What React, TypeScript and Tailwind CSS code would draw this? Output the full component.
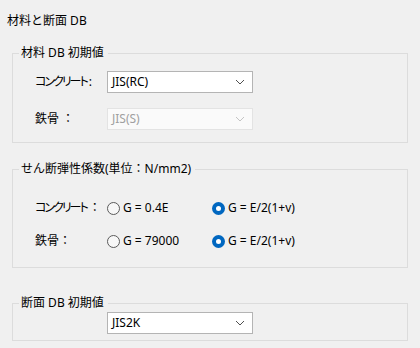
import React from "react";

const font = "font-['Noto_Sans','Noto_Sans_CJK_JP',sans-serif]";
const kana = "[font-feature-settings:'palt'] tracking-[-2px]";

type ComboProps = {
  value: string;
  disabled?: boolean;
};

const Combo: React.FC<ComboProps> = ({ value, disabled }) => {
  return (
    <div
      className={`flex items-center justify-between w-[146px] h-[22px] pl-[4px] pr-[4px] border ${
        disabled ? "border-[#e3e3e3] bg-[#fafafa] text-[#a0a0a0]" : "border-[#b4b4b4] bg-white text-black"
      }`}
    >
      <span className="leading-4">{value}</span>
      <svg width="10" height="6" viewBox="0 0 10 6" className="mr-[3px]">
        <polyline
          points="1,1 5,5 9,1"
          fill="none"
          stroke={disabled ? "#c4c4c4" : "#505050"}
          strokeWidth="1"
        />
      </svg>
    </div>
  );
};

const Radio: React.FC<{ label: string; checked?: boolean }> = ({ label, checked }) => {
  return (
    <div className="flex items-center gap-[3px]">
      {checked ? (
        <span className="flex items-center justify-center w-[13px] h-[13px] rounded-full bg-[#0067c0]">
          <span className="w-[5px] h-[5px] rounded-full bg-white"></span>
        </span>
      ) : (
        <span className="w-[13px] h-[13px] rounded-full border border-[#5a5a5a] bg-[#f7f7f7]"></span>
      )}
      <span className="leading-4 whitespace-nowrap">{label}</span>
    </div>
  );
};

const Group: React.FC<{ title: React.ReactNode; className: string; children: React.ReactNode }> = ({
  title,
  className,
  children,
}) => {
  return (
    <fieldset className={`mx-[12px] border border-[#dcdcdc] ${className}`}>
      <legend className="ml-[6px] pl-[2px] pr-[4px] leading-4">{title}</legend>
      {children}
    </fieldset>
  );
};

export default function App() {
  return (
    <div className={`w-[420px] h-[348px] bg-[#f0f0f0] text-[12px] text-black overflow-hidden ${font}`}>
      <div className="pt-[13px] pl-[7px] leading-4">材料と断面 DB</div>

      <Group title="材料 DB 初期値" className="mt-[16px] h-[98px]">
        <div className="flex flex-col gap-[15px] mt-[10px] pl-[22px]">
          <div className="flex items-center">
            <span className="w-[72px] shrink-0 whitespace-nowrap">
              <span className={kana}>コンクリート</span>
              <span className="ml-[2px]">:</span>
            </span>
            <Combo value="JIS(RC)" />
          </div>
          <div className="flex items-center">
            <span className="w-[72px] shrink-0 whitespace-nowrap">鉄骨 ：</span>
            <Combo value="JIS(S)" disabled />
          </div>
        </div>
      </Group>

      <Group title="せん断弾性係数(単位：N/mm2)" className="mt-[18px] h-[107px]">
        <div className="flex flex-col gap-[11px] mt-[20px] pl-[22px]">
          <div className="flex items-center h-[22px]">
            <span className="w-[72px] shrink-0 whitespace-nowrap">
              <span className={kana}>コンクリート</span>
              <span className="ml-[2px]">：</span>
            </span>
            <div className="w-[105px] shrink-0">
              <Radio label="G = 0.4E" />
            </div>
            <Radio label="G = E/2(1+v)" checked />
          </div>
          <div className="flex items-center h-[22px]">
            <span className="w-[72px] shrink-0 whitespace-nowrap">鉄骨：</span>
            <div className="w-[105px] shrink-0">
              <Radio label="G = 79000" />
            </div>
            <Radio label="G = E/2(1+v)" checked />
          </div>
        </div>
      </Group>

      <Group title="断面 DB 初期値" className="mt-[27px] h-[46px]">
        <div className="mt-[1px] pl-[94px]">
          <Combo value="JIS2K" />
        </div>
      </Group>
    </div>
  );
}
